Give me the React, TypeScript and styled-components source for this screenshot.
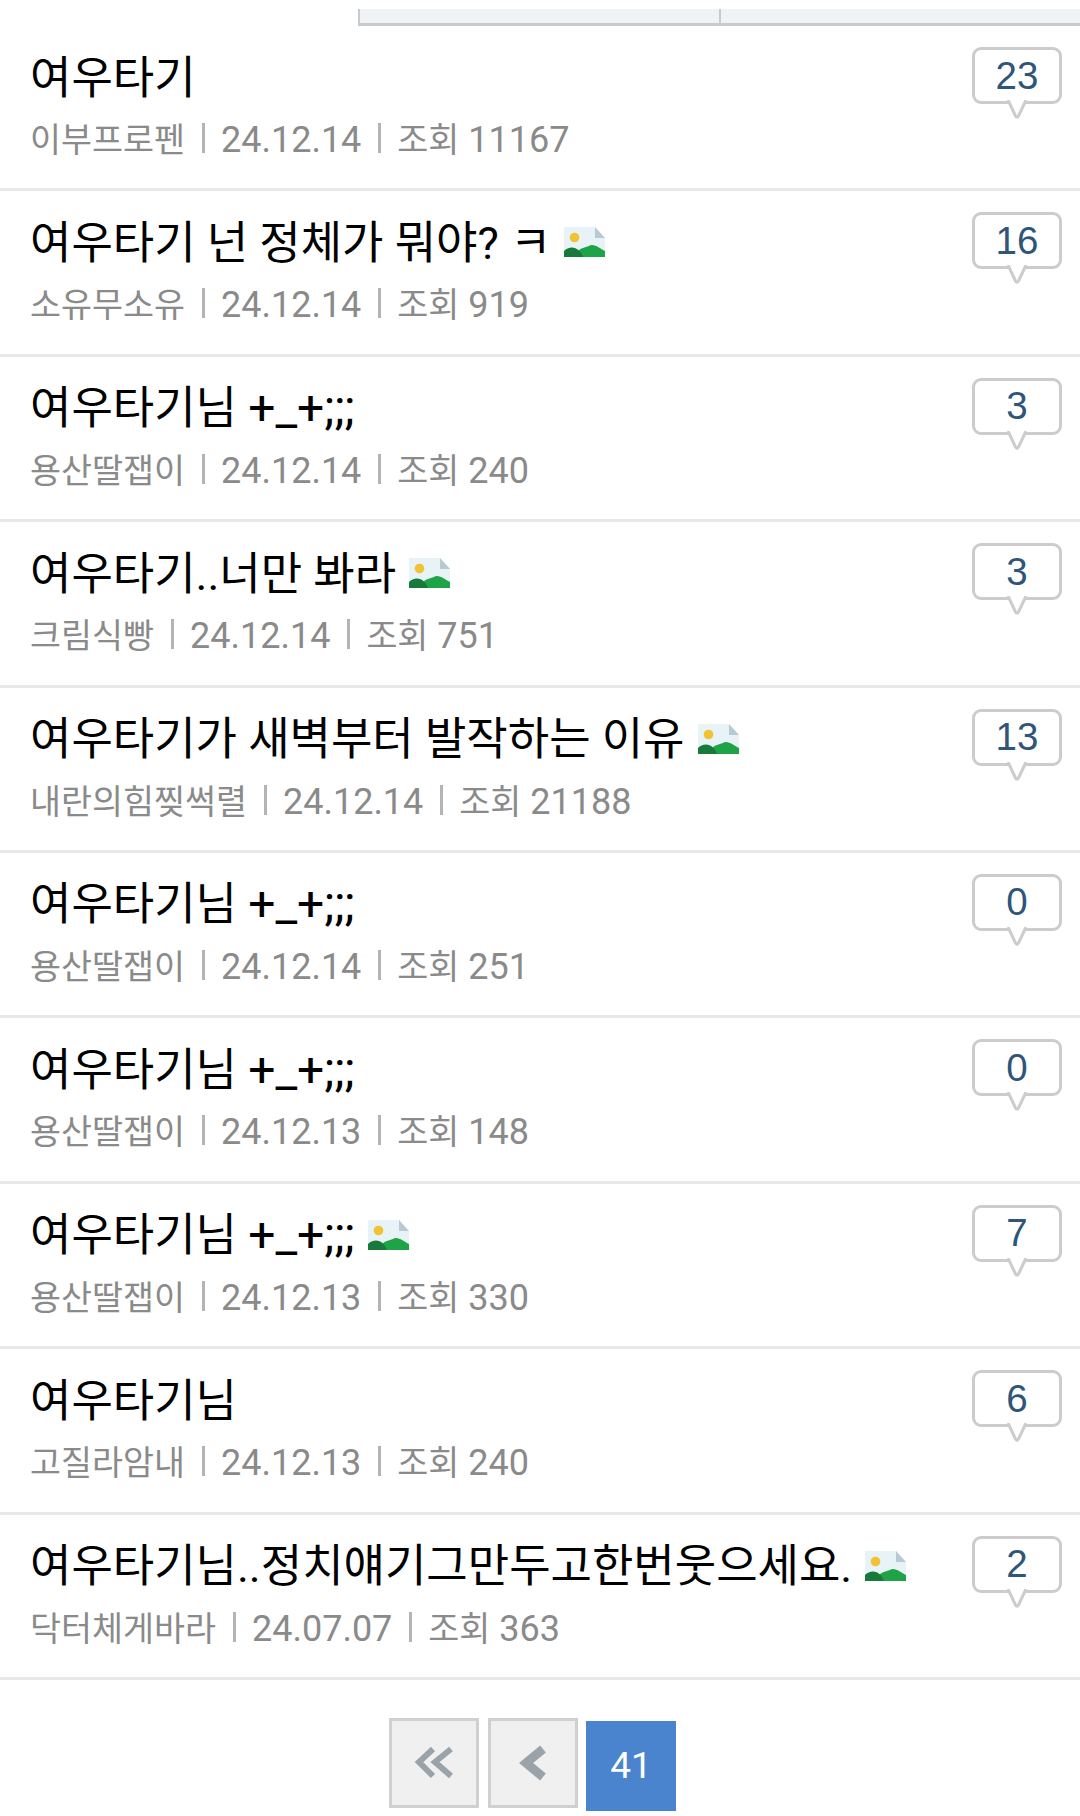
import React from "react";
import styled, { createGlobalStyle } from "styled-components";

const GlobalStyle = createGlobalStyle`
  html, body {
    margin: 0;
    padding: 0;
    background: #fff;
  }
  body {
    width: 1080px;
    height: 1816px;
    overflow: hidden;
    font-family: Roboto, "Noto Sans CJK KR", sans-serif;
  }
`;

type Post = {
  title: string;
  emoticon?: string;
  author: string;
  date: string;
  views: number;
  comments: number;
  hasImage?: boolean;
};

const posts: Post[] = [
  { title: "여우타기", author: "이부프로펜", date: "24.12.14", views: 11167, comments: 23 },
  { title: "여우타기 넌 정체가 뭐야? ㅋ", author: "소유무소유", date: "24.12.14", views: 919, comments: 16, hasImage: true },
  { title: "여우타기님 ", emoticon: "+_+;;;", author: "용산딸잽이", date: "24.12.14", views: 240, comments: 3 },
  { title: "여우타기..너만 봐라", author: "크림식빵", date: "24.12.14", views: 751, comments: 3, hasImage: true },
  { title: "여우타기가 새벽부터 발작하는 이유", author: "내란의힘찢썩렬", date: "24.12.14", views: 21188, comments: 13, hasImage: true },
  { title: "여우타기님 ", emoticon: "+_+;;;", author: "용산딸잽이", date: "24.12.14", views: 251, comments: 0 },
  { title: "여우타기님 ", emoticon: "+_+;;;", author: "용산딸잽이", date: "24.12.13", views: 148, comments: 0 },
  { title: "여우타기님 ", emoticon: "+_+;;;", author: "용산딸잽이", date: "24.12.13", views: 330, comments: 7, hasImage: true },
  { title: "여우타기님", author: "고질라암내", date: "24.12.13", views: 240, comments: 6 },
  { title: "여우타기님..정치얘기그만두고한번웃으세요.", author: "닥터체게바라", date: "24.07.07", views: 363, comments: 2, hasImage: true },
];

function ImageIcon() {
  return (
    <ThumbSvg viewBox="0 0 41 30">
      <path d="M0 0h31l10 11v19H0z" fill="#e8f3f8" />
      <path d="M31 0l10 11H31z" fill="#b9c9d2" />
      <circle cx="10.500" cy="10.500" r="4.800" fill="#f1c232" />
      <path d="M12 30c0-4 3-8 7-9 4-1 7-3 9-3 4 0 9 4 13 6v6z" fill="#1fa347" />
      <path d="M0 30v-6c2-2 5-3.500 8-3.500 5 0 9 4 11 9.500z" fill="#177a3a" />
    </ThumbSvg>
  );
}

function CommentBubble({ count }: { count: number }) {
  return (
    <Bubble>
      <BubbleCount>{count}</BubbleCount>
      <BubbleTail viewBox="0 0 22 19">
        <path d="M2 0l7.500 16c.8 1.500 2.200 1.500 3 0L20 0" fill="#fff" stroke="#cccccc" strokeWidth="3" />
      </BubbleTail>
    </Bubble>
  );
}

function App() {
  return (
    <>
      <GlobalStyle />
      <Page>
        <TabBar>
          <Tab />
          <Tab />
        </TabBar>
        <List>
          {posts.map((post, i) => (
            <Row key={i}>
              <RowBody>
                <Title>
                  <TitleText>
                    {post.title}
                    {post.emoticon && <Emoticon>{post.emoticon}</Emoticon>}
                  </TitleText>
                  {post.hasImage && <ImageIcon />}
                </Title>
                <Meta>
                  <Author>{post.author}</Author>
                  <Sep />
                  <span>{post.date}</span>
                  <Sep />
                  <span>
                    <ViewsLabel>조회</ViewsLabel> {post.views}
                  </span>
                </Meta>
              </RowBody>
              <CommentBubble count={post.comments} />
            </Row>
          ))}
        </List>
        <Pager>
          <PageButton>
            <svg width="40" height="34" viewBox="0 0 40 34" fill="none" stroke="#9aa3a9" strokeWidth="6">
              <path d="M19 3L5 16l14 14" />
              <path d="M37 3L21 16l16 14" />
            </svg>
          </PageButton>
          <PageButton>
            <svg width="28" height="36" viewBox="0 0 28 36" fill="none" stroke="#9aa3a9" strokeWidth="9">
              <path d="M24 4L7 18l17 14" />
            </svg>
          </PageButton>
          <CurrentPage>41</CurrentPage>
        </Pager>
      </Page>
    </>
  );
}

const Page = styled.div`
  width: 1080px;
  padding-top: 9px;
`;

const TabBar = styled.div`
  display: flex;
  margin-left: 358px;
  height: 14px;
  background: #f0f3f6;
  border-left: 2px solid #c8cacc;
  border-bottom: 3px solid #c8cacc;
`;

const Tab = styled.div`
  flex: 1;
  & + & {
    border-left: 2px solid #c8cacc;
  }
`;

const List = styled.div`
  display: flex;
  flex-direction: column;
`;

const Row = styled.div`
  box-sizing: border-box;
  height: 165.4px;
  display: flex;
  justify-content: space-between;
  padding: 17px 18px 0 30px;
  border-bottom: 3px solid #e8e8e8;
`;

const RowBody = styled.div`
  display: flex;
  flex-direction: column;
  gap: 8px;
`;

const Title = styled.div`
  display: flex;
  align-items: center;
  gap: 13px;
  height: 62px;
  font-size: 45px;
  color: #000;
  white-space: nowrap;
`;

const TitleText = styled.span`
  white-space: pre;
`;

const Emoticon = styled.span`
  font-size: 48px;
`;

const ThumbSvg = styled.svg`
  width: 41px;
  height: 30px;
  margin-top: 6px;
  flex: none;
`;

const Meta = styled.div`
  display: flex;
  align-items: baseline;
  height: 50px;
  font-size: 36px;
  color: #8a8a8a;
  white-space: nowrap;
`;

const Author = styled.span`
  font-size: 33.7px;
`;

const ViewsLabel = styled.span`
  font-size: 33.7px;
`;

const Sep = styled.i`
  align-self: center;
  width: 3px;
  height: 30px;
  margin: 0 16px 0 17px;
  background: #b4b4b4;
`;

const Bubble = styled.div`
  position: relative;
  box-sizing: border-box;
  width: 90px;
  height: 57px;
  margin-top: 4px;
  display: flex;
  align-items: center;
  justify-content: center;
  border: 3px solid #cccccc;
  border-radius: 9px;
  background: #fff;
`;

const BubbleCount = styled.span`
  font-family: "Liberation Sans", sans-serif;
  font-size: 38.5px;
  color: #2f5578;
`;

const BubbleTail = styled.svg`
  position: absolute;
  left: 31px;
  top: 50px;
  width: 22px;
  height: 19px;
`;

const Pager = styled.div`
  display: flex;
  justify-content: center;
  align-items: flex-start;
  gap: 9px;
  padding: 38px 15px 0 0;
`;

const PageButton = styled.div`
  box-sizing: border-box;
  width: 90px;
  height: 90px;
  display: flex;
  align-items: center;
  justify-content: center;
  background: #f0f0f0;
  border: 3px solid #d0d0d0;
`;

const CurrentPage = styled.div`
  width: 90px;
  height: 90px;
  margin: 3px 0 0 -1px;
  display: flex;
  align-items: center;
  justify-content: center;
  background: #4a84cf;
  color: #fff;
  font-size: 37px;
`;

export default App;
